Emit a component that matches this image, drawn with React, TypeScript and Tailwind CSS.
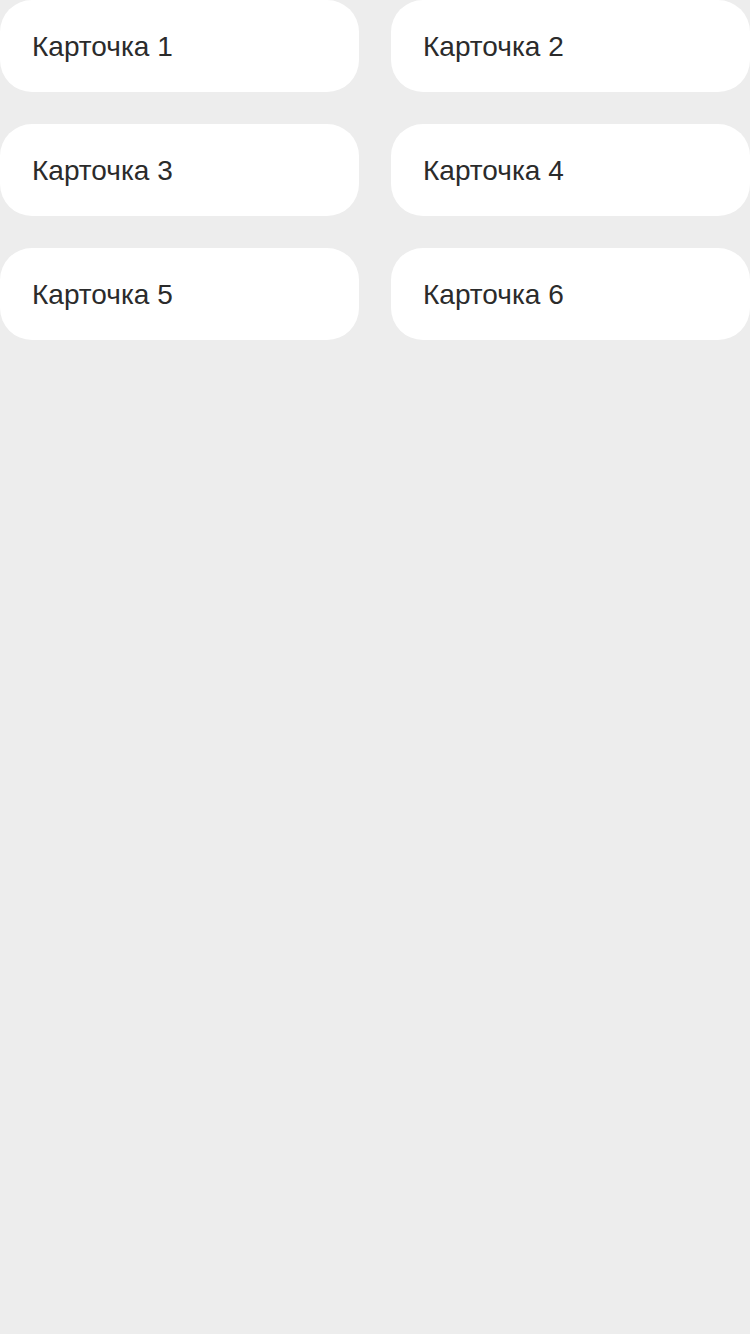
import React from "react";

const cards = [1, 2, 3, 4, 5, 6];

export default function App() {
  return (
    <div className="min-h-[1334px] w-[750px] bg-[#ededed] font-['Liberation_Sans',Arial,sans-serif]">
      <div className="grid grid-cols-2 gap-8">
        {cards.map((n) => (
          <div
            key={n}
            className="flex h-[92px] items-center rounded-[32px] bg-white px-8 pt-[2px] text-[28px] text-[#2b2b2b]"
          >
            Карточка {n}
          </div>
        ))}
      </div>
    </div>
  );
}
